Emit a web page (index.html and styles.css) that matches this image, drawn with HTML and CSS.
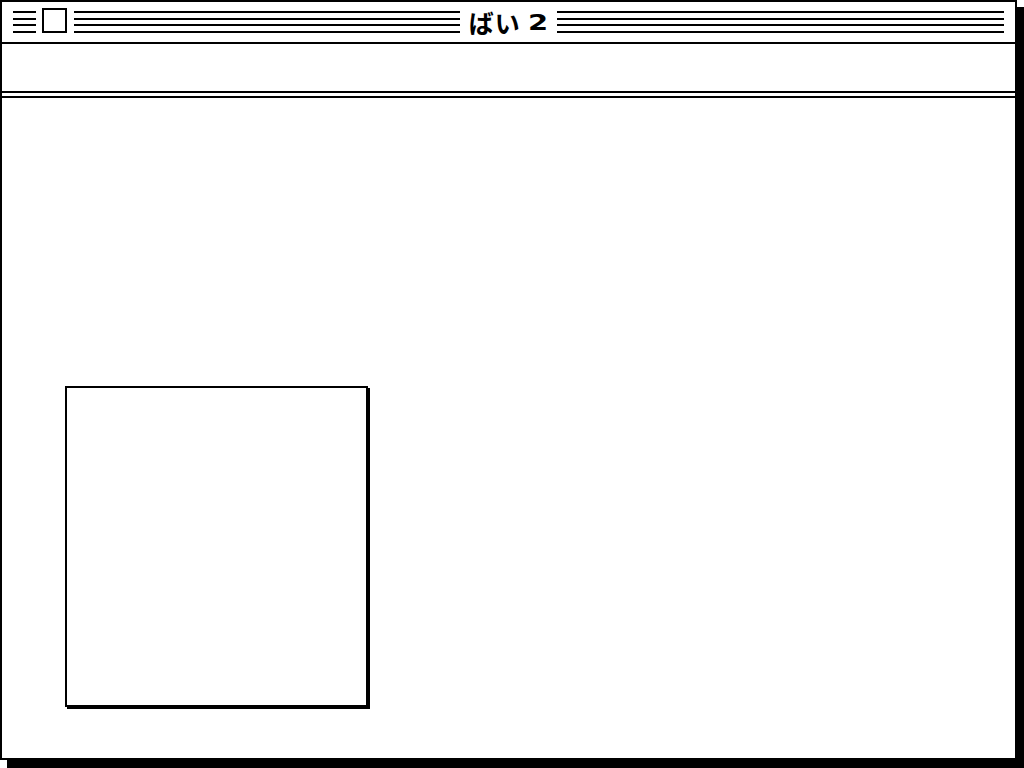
FILE: index.html
```html
<!DOCTYPE html>
<html lang="ja">
<head>
<meta charset="utf-8">
<title>ばい 2</title>
<link rel="stylesheet" href="styles.css">
</head>
<body>
<div class="window">
  <div class="titlebar">
    <div class="tb-left">
      <div class="stripes menu"></div>
      <div class="closebox"></div>
      <div class="stripes fill"></div>
    </div>
    <div class="title">ばい <span class="num">2</span></div>
    <div class="tb-right">
      <div class="stripes fill"></div>
    </div>
  </div>
  <div class="toolbar"></div>
  <div class="rule"></div>
  <div class="content">
    <div class="panel"></div>
  </div>
</div>
</body>
</html>
```

FILE: styles.css
```css
html, body {
  margin: 0;
  padding: 0;
  background: #fff;
}
body {
  width: 1024px;
  height: 768px;
  overflow: hidden;
  font-family: "Noto Sans CJK JP", "Noto Sans", sans-serif;
}
.window {
  box-sizing: border-box;
  width: 1017px;
  height: 760px;
  border: 2px solid #000;
  background: #fff;
  box-shadow: 7px 7px 0 #000, 7px 8px 0 #000;
  display: flex;
  flex-direction: column;
}
.titlebar {
  height: 40px;
  border-bottom: 2px solid #000;
  display: grid;
  grid-template-columns: 1fr 97px 1fr;
  padding: 0 11px;
}
.tb-left {
  display: flex;
  align-items: flex-start;
}
.tb-right {
  display: flex;
  align-items: flex-start;
}
.stripes {
  height: 22px;
  margin-top: 9px;
  background: linear-gradient(to bottom,
    #000 0 2px, transparent 2px 7px,
    #000 7px 9px, transparent 9px 13px,
    #000 13px 15px, transparent 15px 20px,
    #000 20px 22px);
}
.menu {
  width: 23px;
  flex: none;
}
.closebox {
  flex: none;
  box-sizing: border-box;
  width: 25px;
  height: 25px;
  margin: 6px 7px 0 6px;
  border: 2px solid #000;
}
.fill {
  flex: 1;
}
.title {
  text-align: center;
  font-weight: 700;
  font-size: 25px;
  line-height: 40px;
  color: #000;
  white-space: nowrap;
  letter-spacing: 1px;
}
.num {
  display: inline-block;
  font-family: "DejaVu Sans", sans-serif;
  font-size: 21px;
  line-height: 1;
  vertical-align: 3px;
  transform: scaleX(1.38);
  transform-origin: left center;
  padding-right: 5px;
}
.toolbar {
  height: 47px;
  border-bottom: 2px solid #000;
}
.rule {
  height: 3px;
  border-bottom: 2px solid #000;
}
.content {
  flex: 1;
  padding: 288px 0 0 63px;
}
.panel {
  box-sizing: border-box;
  width: 303px;
  height: 321px;
  border: 2px solid #000;
  background: #fff;
  box-shadow: 2px 2px 0 #000;
}
```
